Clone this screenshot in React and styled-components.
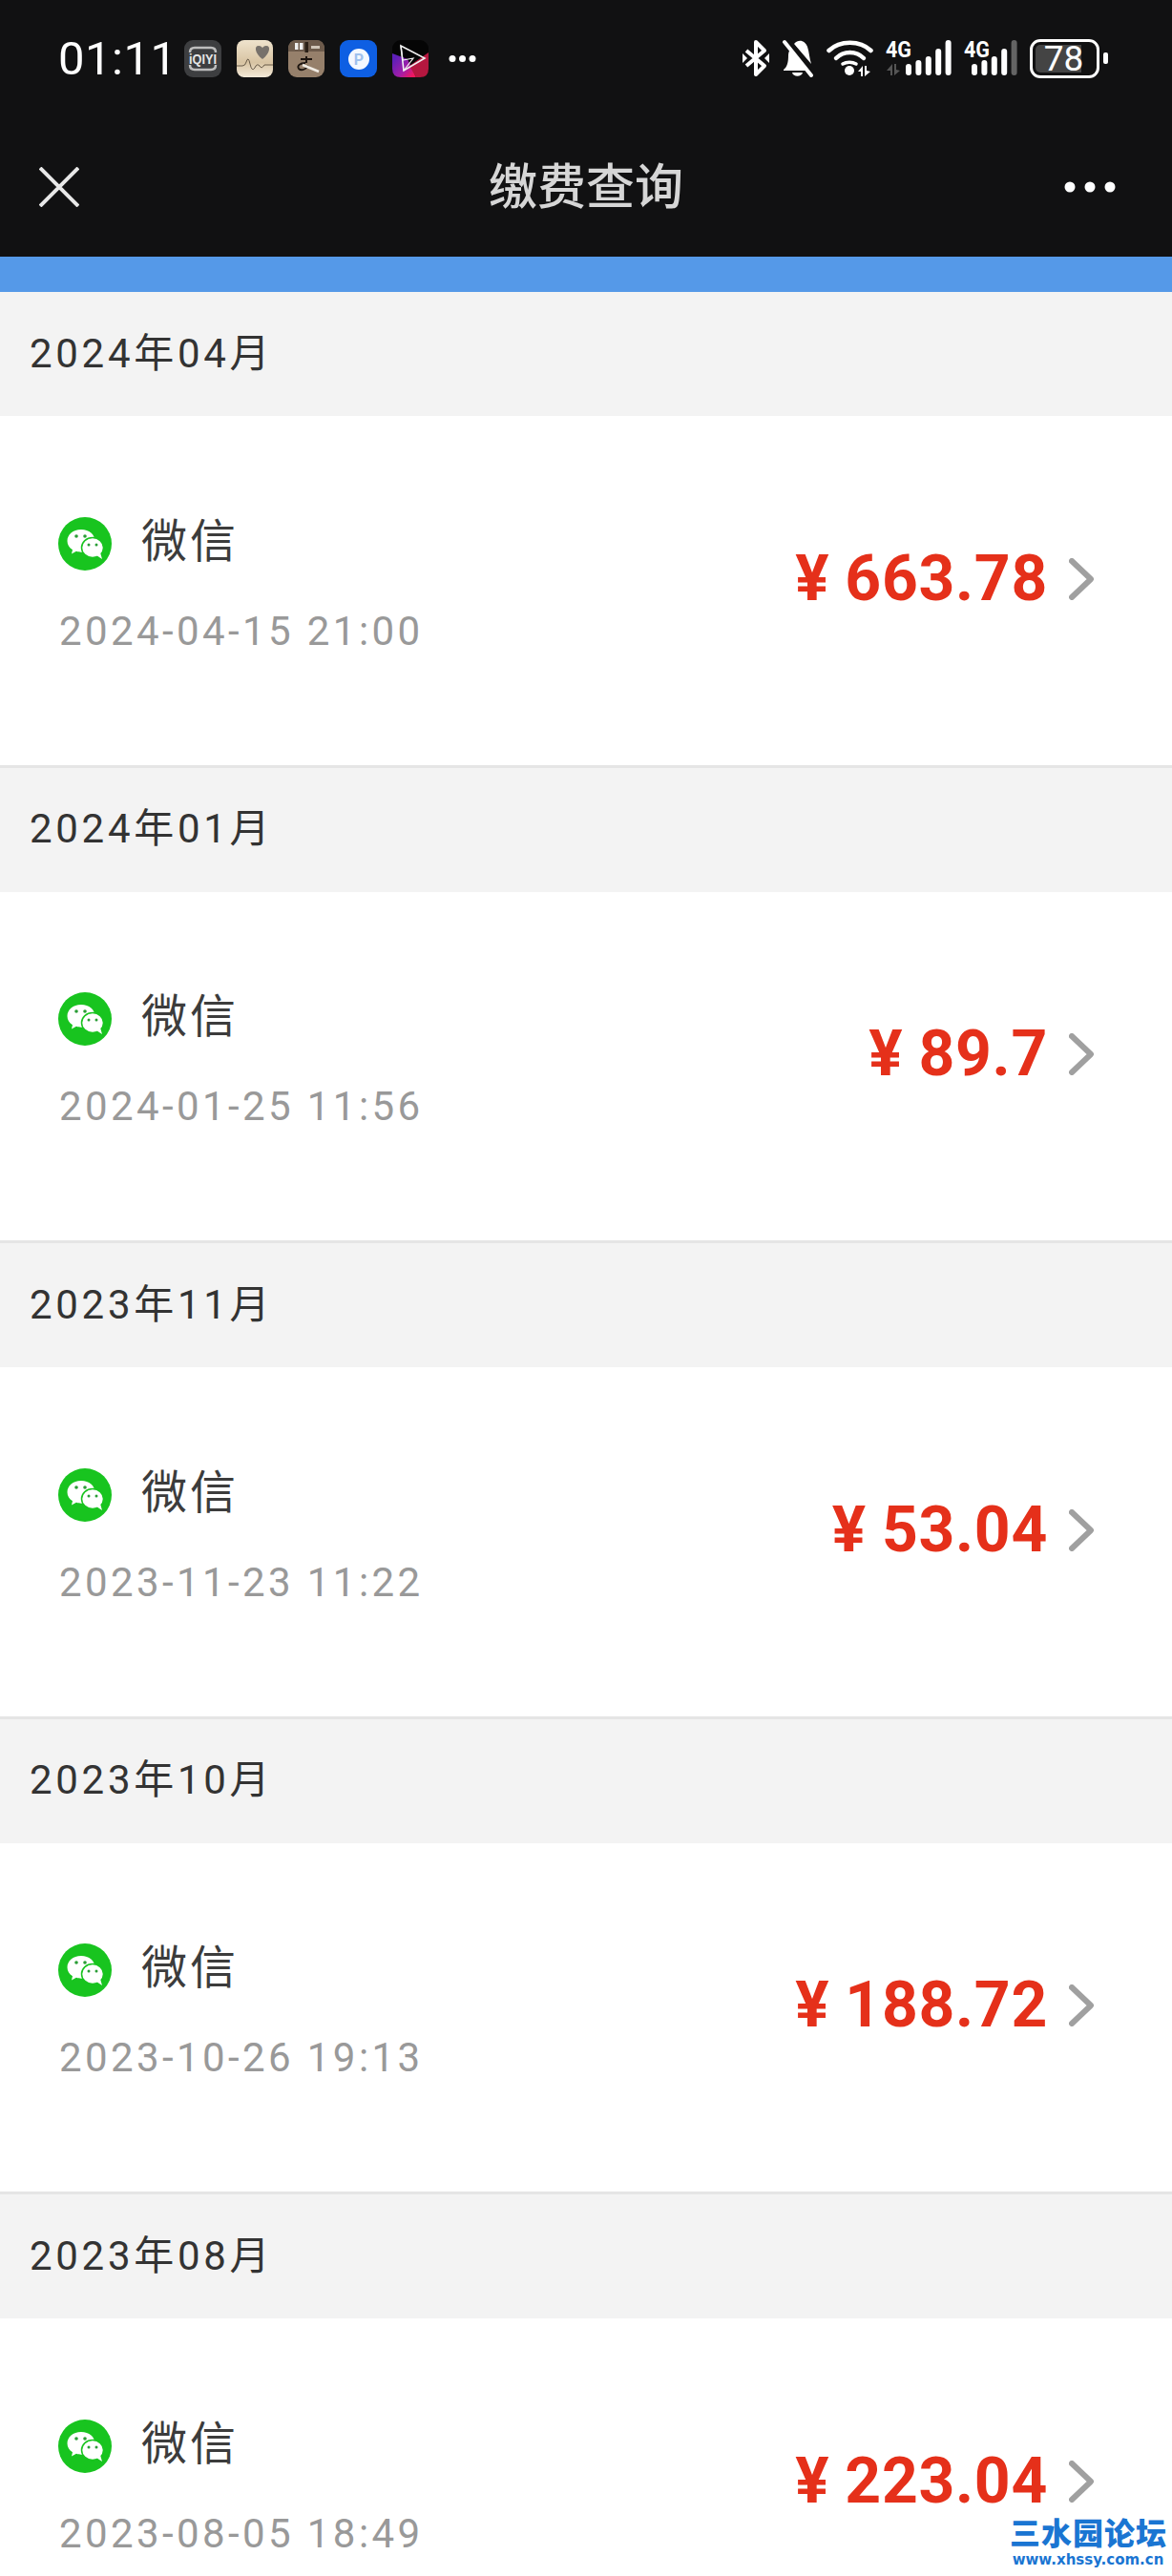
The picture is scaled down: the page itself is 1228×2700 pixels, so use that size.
import React from "react";
import styled, { createGlobalStyle } from "styled-components";

const GlobalStyle = createGlobalStyle`
  html, body {
    margin: 0;
    padding: 0;
    background: #fff;
  }
  * {
    box-sizing: border-box;
  }
`;

const Page = styled.div`
  position: relative;
  width: 1228px;
  height: 2700px;
  overflow: hidden;
  background: #fff;
  font-family: Roboto, "Noto Sans CJK SC", sans-serif;
`;

const Header = styled.header`
  background: #111112;
  height: 269px;
`;

const StatusBar = styled.div`
  height: 122px;
  display: flex;
  align-items: center;
  justify-content: space-between;
  padding: 0 67px 0 61px;
`;

const StatusGroup = styled.div`
  display: flex;
  align-items: center;
  gap: ${(p) => p.$gap || 0}px;
`;

const Time = styled.span`
  width: 116px;
  color: #fff;
  font-size: 49px;
  font-weight: 400;
  letter-spacing: 0.5px;
  line-height: 1;
  white-space: nowrap;
`;

const Nav = styled.nav`
  height: 147px;
  display: grid;
  grid-template-columns: 1fr auto 1fr;
  align-items: center;
  padding: 0 41px;
`;

const Title = styled.h1`
  margin: 0 0 6px;
  color: #d6d6d6;
  font-size: 51px;
  font-weight: 500;
  line-height: 1;
  font-family: "Noto Sans CJK SC", sans-serif;
`;

const NavSide = styled.div`
  display: flex;
  justify-content: ${(p) => (p.$end ? "flex-end" : "flex-start")};
  padding-right: ${(p) => (p.$end ? 18 : 0)}px;
`;

const BlueBar = styled.div`
  height: 37px;
  background: #5599e8;
`;

const MonthHead = styled.div`
  height: 130px;
  display: flex;
  align-items: center;
  padding: 0 0 10px 31px;
  background: #f3f3f3;
  color: #333;
  font-size: 42px;
  letter-spacing: 3.7px;
  font-family: Roboto, "Noto Sans CJK SC", sans-serif;
`;

const Row = styled.div`
  height: 368.5px;
  display: flex;
  align-items: center;
  justify-content: space-between;
  padding: 0 82px 24px 61px;
  background: #fff;
  border-bottom: 3px solid #e5e5e5;
`;

const Info = styled.div`
  display: flex;
  flex-direction: column;
  gap: 42px;
  padding-top: 12px;
`;

const PayWay = styled.div`
  display: flex;
  align-items: center;
  gap: 31px;
`;

const PayName = styled.span`
  color: #3c3c3c;
  font-size: 48px;
  letter-spacing: 3px;
  line-height: 62px;
  font-family: "Noto Sans CJK SC", sans-serif;
  margin-top: -14px;
`;

const PayTime = styled.div`
  color: #999;
  font-size: 42px;
  letter-spacing: 3.4px;
  line-height: 44px;
  padding-left: 1px;
`;

const AmountWrap = styled.div`
  display: flex;
  align-items: center;
  gap: 22px;
`;

const Amount = styled.span`
  color: #e5301a;
  font-size: 66px;
  font-weight: 700;
  letter-spacing: 0.7px;
  line-height: 1;
`;

const Currency = styled.span`
  margin-right: 16px;
`;

const Watermark = styled.div`
  position: absolute;
  right: 6px;
  top: 2631px;
  width: 164px;
  text-align: center;
  color: #1a75d2;
  font-weight: 900;
`;

const WatermarkTitle = styled.div`
  font-size: 32px;
  line-height: 44px;
  letter-spacing: 1px;
  font-family: "Noto Sans CJK SC", sans-serif;
  white-space: nowrap;
`;

const WatermarkUrl = styled.div`
  font-size: 15px;
  line-height: 16px;
  font-weight: 700;
  font-family: "DejaVu Sans", sans-serif;
  white-space: nowrap;
`;

const CloseIcon = () => (
  <svg width="42" height="42" viewBox="0 0 42 42">
    <path d="M1 1L41 41M41 1L1 41" stroke="#e8e8e8" strokeWidth="4" fill="none" />
  </svg>
);

const MoreIcon = () => (
  <svg width="54" height="12" viewBox="0 0 54 12">
    <circle cx="6" cy="6" r="5.500" fill="#fff" />
    <circle cx="27" cy="6" r="5.500" fill="#fff" />
    <circle cx="48" cy="6" r="5.500" fill="#fff" />
  </svg>
);

const ChevronIcon = () => (
  <svg width="26" height="44" viewBox="0 0 26 44">
    <path d="M3 3L23 22L3 41" stroke="#a0a0a0" strokeWidth="6" strokeLinecap="round" strokeLinejoin="round" fill="none" />
  </svg>
);

const WechatIcon = () => (
  <svg width="56" height="56" viewBox="0 0 56 56">
    <circle cx="28" cy="28" r="28" fill="#18c41f" />
    <path d="M24 13C15.500 13 9.500 18.500 9.500 25C9.500 29 11.500 32 15 34.200L14 38.500L19 35.800C21 36.500 22.500 36.700 24 36.700C33 36.700 38.500 31 38.500 25C38.500 18.500 32.500 13 24 13Z" fill="#fff" />
    <ellipse cx="36" cy="32" rx="11.500" ry="10.500" fill="#fff" stroke="#18c41f" strokeWidth="1.500" />
    <path d="M40 40L46 44L44 37Z" fill="#fff" />
    <circle cx="19" cy="20" r="1.800" fill="#2a9d36" />
    <circle cx="28" cy="20" r="1.800" fill="#2a9d36" />
    <circle cx="32" cy="29" r="1.500" fill="#2a9d36" />
    <circle cx="40" cy="29" r="1.500" fill="#2a9d36" />
  </svg>
);

const IqiyiIcon = () => (
  <svg width="39" height="39" viewBox="0 0 39 39">
    <rect width="39" height="39" rx="9" fill="#3d3e40" />
    <path d="M6 13Q6 8 11 8H28Q33 8 33 13M6 26Q6 31 11 31H28Q33 31 33 26" fill="none" stroke="#bdbdbd" strokeWidth="2.500" />
    <text x="19.500" y="25" textAnchor="middle" fontSize="14" fontWeight="700" fill="#e6e6e6" fontFamily="Liberation Sans, sans-serif" textLength="29" lengthAdjust="spacingAndGlyphs">iQIYI</text>
  </svg>
);

const HeartIcon = () => (
  <svg width="38" height="39" viewBox="0 0 38 39">
    <defs>
      <linearGradient id="heartBg" x1="0" y1="0" x2="0" y2="1">
        <stop offset="0" stopColor="#efe3cd" />
        <stop offset="0.6" stopColor="#d8c4a3" />
        <stop offset="1" stopColor="#f3e9d8" />
      </linearGradient>
    </defs>
    <rect width="38" height="39" rx="8" fill="url(#heartBg)" />
    <path d="M27 20C19 14 18 6 23 6C25.500 6 27 7.500 27 8.500C27 7.500 28.500 6 31 6C36 6 35 14 27 20Z" fill="#77716b" />
    <path d="M0 27H6Q9 27 10 23Q12 16 14 25Q16 34 19 29Q21 24 24 27Q26 31 29 26L38 26" fill="none" stroke="#4a3d2e" strokeWidth="0.800" />
  </svg>
);

const BoxIcon = () => (
  <svg width="38" height="39" viewBox="0 0 38 39">
    <rect width="38" height="39" rx="9" fill="#96806b" />
    <path d="M0 12V9Q0 0 9 0H29Q38 0 38 9V12Z" fill="#6d5b4c" />
    <rect x="7" y="3" width="3.500" height="7" fill="#eee" />
    <rect x="12" y="3" width="3.500" height="7" fill="#eee" />
    <rect x="24" y="6" width="9" height="3" fill="#cfc5b8" />
    <rect x="17.500" y="2" width="3.500" height="11" fill="#2b2017" />
    <path d="M19 17V24M13 20H25" stroke="#1d1510" strokeWidth="2" />
    <path d="M18 24C12 24 9 27 11 30C14 33 19 30 21 27" fill="none" stroke="#1d1510" strokeWidth="1.800" />
    <path d="M15 26L32 33" stroke="#f1ece4" strokeWidth="2.500" />
  </svg>
);

const ParkIcon = () => (
  <svg width="39" height="39" viewBox="0 0 39 39">
    <rect width="39" height="39" rx="9" fill="#0e5fe3" />
    <circle cx="20" cy="20" r="11" fill="#f4f8ff" />
    <text x="20" y="26" textAnchor="middle" fontSize="16" fontWeight="700" fill="#9fc1ee" fontFamily="Roboto, sans-serif">P</text>
  </svg>
);

const VideoIcon = () => (
  <svg width="38" height="39" viewBox="0 0 38 39">
    <defs>
      <linearGradient id="videoBg" x1="0" y1="0.300" x2="0.800" y2="1">
        <stop offset="0" stopColor="#5c1fb8" />
        <stop offset="0.600" stopColor="#a21ea8" />
        <stop offset="1" stopColor="#f0185e" />
      </linearGradient>
    </defs>
    <rect width="38" height="39" rx="9" fill="#050505" />
    <path d="M0 14L16 20L25 39H9Q0 39 0 30Z" fill="url(#videoBg)" />
    <path d="M38 13V30Q38 39 29 39H25L18 27Z" fill="#b4173f" />
    <path d="M9 6L34 19L12 32Z" fill="none" stroke="#f1f1f1" strokeWidth="1.600" />
    <path d="M9 6L11 21L22 19L12 32" fill="none" stroke="#f1f1f1" strokeWidth="1.200" />
  </svg>
);

const MiniDots = () => (
  <svg width="29" height="9" viewBox="0 0 29 9" style={{ marginLeft: 5 }}>
    <circle cx="4" cy="4.500" r="3.500" fill="#fff" />
    <circle cx="14.500" cy="4.500" r="3.500" fill="#fff" />
    <circle cx="25" cy="4.500" r="3.500" fill="#fff" />
  </svg>
);

const BluetoothIcon = () => (
  <svg width="28" height="40" viewBox="0 0 28 40">
    <path d="M4 12L23 28L14 37V3L23 12L4 28" fill="none" stroke="#fff" strokeWidth="4" strokeLinejoin="round" />
    <path d="M0 15V25L5 20Z" fill="#fff" />
    <path d="M28 15V25L23 20Z" fill="#fff" />
  </svg>
);

const BellOffIcon = () => (
  <svg width="34" height="40" viewBox="0 0 34 40">
    <path d="M2 32C6 29 7 24 7 17C7 14 8 12 9 11L27 33H2Z" fill="#fff" />
    <path d="M13 5C18 -1 25 2 27 8C29 14 29 20 31 26Z" fill="#fff" />
    <path d="M11 35H22C21 40 12 40 11 35Z" fill="#fff" />
    <path d="M3 3L31 38" stroke="#fff" strokeWidth="4" strokeLinecap="round" />
    <path d="M7 0L35 35" stroke="#111112" strokeWidth="2.500" />
  </svg>
);

const WifiIcon = () => (
  <svg width="49" height="40" viewBox="0 0 49 40">
    <path d="M2.500 12C14 1 35 1 46.500 12" fill="none" stroke="#fff" strokeWidth="4.500" strokeLinecap="round" />
    <path d="M10 20C18 12 31 12 39 20" fill="none" stroke="#fff" strokeWidth="4.500" strokeLinecap="round" />
    <circle cx="24" cy="33" r="5" fill="#fff" />
    <path d="M17 26C21 23.500 27 23.500 31 26" fill="none" stroke="#fff" strokeWidth="3.500" strokeLinecap="round" />
    <path d="M33 34L38 28V39H36V34Z" fill="#fff" />
    <path d="M40 28H42V33L46 34L40 39Z" fill="#fff" />
  </svg>
);

const barHeights = [12, 16, 20, 28, 37];

const SignalBars = ({ dim }) =>
  barHeights.map((h, i) => (
    <rect
      key={i}
      x={i * 10.4}
      y={38 - h}
      width="6"
      height={h}
      rx="3"
      fill="#fff"
      opacity={dim === i ? 0.35 : 1}
    />
  ));

const SignalOne = () => (
  <svg width="69" height="48" viewBox="0 -4 69 48">
    <text x="0" y="19" fontSize="23" fontWeight="700" fill="#fff" fontFamily="Roboto, sans-serif" textLength="27" lengthAdjust="spacingAndGlyphs">4G</text>
    <path d="M1 33L7 26V38H5V33Z" fill="#555" />
    <path d="M9 26H11V32L15 33L9 38Z" fill="#555" />
    <g transform="translate(21 0)">
      <SignalBars />
    </g>
  </svg>
);

const SignalTwo = () => (
  <svg width="56" height="48" viewBox="0 -4 56 48">
    <text x="0" y="19" fontSize="23" fontWeight="700" fill="#fff" fontFamily="Roboto, sans-serif" textLength="27" lengthAdjust="spacingAndGlyphs">4G</text>
    <g transform="translate(8 0)">
      <SignalBars dim={4} />
    </g>
  </svg>
);

const BatteryFrame = styled.div`
  position: relative;
  width: 73px;
  height: 41px;
  border: 3px solid #fff;
  border-radius: 11px;
  padding: 3px;
  margin-right: 4px;
`;

const BatteryFill = styled.div`
  width: 78%;
  height: 100%;
  background: #444;
  border-radius: 5px 0 0 5px;
`;

const BatteryText = styled.span`
  position: absolute;
  left: 0;
  right: 2px;
  top: 0;
  bottom: 0;
  display: flex;
  align-items: center;
  justify-content: center;
  color: #fff;
  font-size: 37px;
  line-height: 1;
`;

const BatteryNub = styled.div`
  width: 5px;
  height: 12px;
  border-radius: 2px;
  background: #fff;
`;

const records = [
  { month: "2024年04月", time: "2024-04-15 21:00", amount: "663.78" },
  { month: "2024年01月", time: "2024-01-25 11:56", amount: "89.7" },
  { month: "2023年11月", time: "2023-11-23 11:22", amount: "53.04" },
  { month: "2023年10月", time: "2023-10-26 19:13", amount: "188.72" },
  { month: "2023年08月", time: "2023-08-05 18:49", amount: "223.04" },
];

const App = () => {
  return (
    <Page>
      <GlobalStyle />
      <Header>
        <StatusBar>
          <StatusGroup $gap={16}>
            <Time>01:11</Time>
            <IqiyiIcon />
            <HeartIcon />
            <BoxIcon />
            <ParkIcon />
            <VideoIcon />
            <MiniDots />
          </StatusGroup>
          <StatusGroup $gap={13}>
            <BluetoothIcon />
            <BellOffIcon />
            <WifiIcon />
            <SignalOne />
            <SignalTwo />
            <StatusGroup>
              <BatteryFrame>
                <BatteryFill />
                <BatteryText>78</BatteryText>
              </BatteryFrame>
              <BatteryNub />
            </StatusGroup>
          </StatusGroup>
        </StatusBar>
        <Nav>
          <NavSide>
            <CloseIcon />
          </NavSide>
          <Title>缴费查询</Title>
          <NavSide $end>
            <MoreIcon />
          </NavSide>
        </Nav>
      </Header>
      <BlueBar />
      {records.map((record) => (
        <section key={record.time}>
          <MonthHead>{record.month}</MonthHead>
          <Row>
            <Info>
              <PayWay>
                <WechatIcon />
                <PayName>微信</PayName>
              </PayWay>
              <PayTime>{record.time}</PayTime>
            </Info>
            <AmountWrap>
              <Amount>
                <Currency>¥</Currency>
                {record.amount}
              </Amount>
              <ChevronIcon />
            </AmountWrap>
          </Row>
        </section>
      ))}
      <Watermark>
        <WatermarkTitle>三水园论坛</WatermarkTitle>
        <WatermarkUrl>www.xhssy.com.cn</WatermarkUrl>
      </Watermark>
    </Page>
  );
};

export default App;
